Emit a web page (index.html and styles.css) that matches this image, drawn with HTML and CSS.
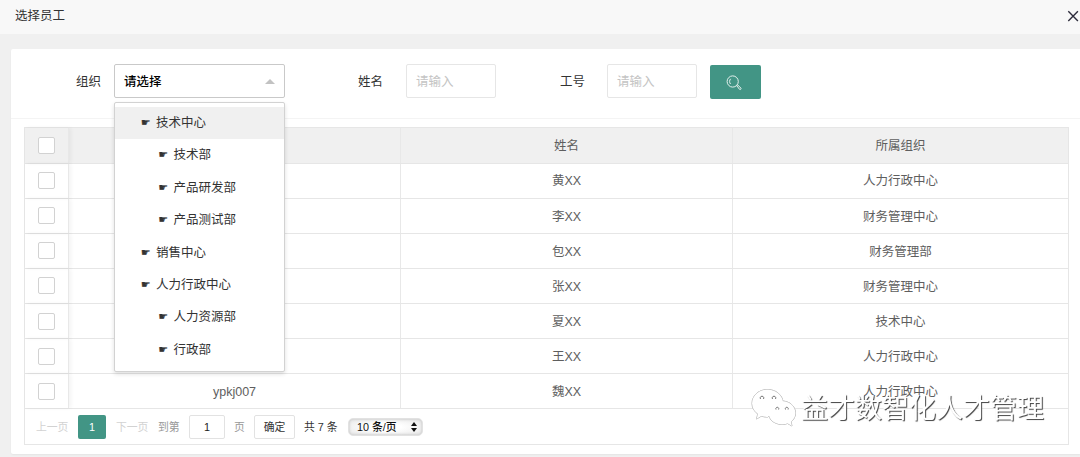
FILE: index.html
```html
<!DOCTYPE html>
<html lang="zh-CN">
<head>
<meta charset="utf-8">
<title>选择员工</title>
<link rel="stylesheet" href="styles.css">
</head>
<body>
<header class="titlebar">
  <span>选择员工</span>
  <svg class="close" viewBox="0 0 12 12"><path d="M1.300 1.300l9.600 9.600M10.900 1.300l-9.600 9.600"/></svg>
</header>
<main class="card">
  <form class="toolbar">
    <label class="label label-org">组织</label>
    <div class="select">
      <span>请选择</span><i class="caret"></i>
      <ul class="menu">
        <li class="active"><b>☛</b>技术中心</li>
        <li class="child"><b>☛</b>技术部</li>
        <li class="child"><b>☛</b>产品研发部</li>
        <li class="child"><b>☛</b>产品测试部</li>
        <li><b>☛</b>销售中心</li>
        <li><b>☛</b>人力行政中心</li>
        <li class="child"><b>☛</b>人力资源部</li>
        <li class="child"><b>☛</b>行政部</li>
      </ul>
    </div>
    <label class="label label-name">姓名</label>
    <div class="input">请输入</div>
    <label class="label label-no">工号</label>
    <div class="input">请输入</div>
    <div class="search">
      <svg viewBox="0 0 16 16"><circle cx="6.700" cy="6.500" r="5.600"/><path d="M4.600 3.800C3.300 5.300 3.300 7.500 4.500 9"/><path d="M10.700 10.600l.9-.8 3.200 3.200c.8.9-.5 2.100-1.300 1.300z"/></svg>
    </div>
  </form>
  <section class="grid">
    <div class="row head"><div class="check"><i></i></div><div></div><div>姓名</div><div>所属组织</div></div>
    <div class="row"><div class="check"><i></i></div><div></div><div>黄XX</div><div>人力行政中心</div></div>
    <div class="row"><div class="check"><i></i></div><div></div><div>李XX</div><div>财务管理中心</div></div>
    <div class="row"><div class="check"><i></i></div><div></div><div>包XX</div><div>财务管理部</div></div>
    <div class="row"><div class="check"><i></i></div><div></div><div>张XX</div><div>财务管理中心</div></div>
    <div class="row"><div class="check"><i></i></div><div></div><div>夏XX</div><div>技术中心</div></div>
    <div class="row"><div class="check"><i></i></div><div></div><div>王XX</div><div>人力行政中心</div></div>
    <div class="row"><div class="check"><i></i></div><div>ypkj007</div><div>魏XX</div><div>人力行政中心</div></div>
    <footer class="pager">
      <span class="muted prev">上一页</span>
      <span class="page">1</span>
      <span class="muted next">下一页</span>
      <span class="goto">到第</span>
      <span class="box number">1</span>
      <span class="goto unit">页</span>
      <span class="box confirm">确定</span>
      <span class="total">共 7 条</span>
      <span class="limit">10 条/页<svg viewBox="0 0 6 10"><path d="M0 4L3 0l3 4zM0 6h6l-3 4z"/></svg></span>
    </footer>
  </section>
</main>
<div class="watermark">
  <svg viewBox="0 0 46 40">
    <path class="bubble" d="M17 29c-2.600 .2-4.500-.2-6.500-1L5.500 31l1.300-5C3.300 23.400 1 19.800 1 15.500 1 7.500 8 1.500 16.500 1.500c8 0 14.500 5 15.500 12"/>
    <path class="bubble" d="M31 13c7.500 0 13.500 5.300 13.500 12 0 3.800-1.800 6.600-4.500 9l1 4-4.400-2.500c-1.800.6-3.600.9-5.600.9C23.500 36.400 17.500 31.500 17.500 25S23.500 13 31 13z"/>
    <path class="eye" d="M9.500 11a1.800 1.800 0 1 1 3 0M21.500 11a1.800 1.800 0 1 1 3 0M25 21.500a1.500 1.500 0 1 1 2.600 0M34.500 21.500a1.500 1.500 0 1 1 2.600 0"/>
  </svg>
  <span>益才数智化人才管理</span>
</div>
</body>
</html>
```

FILE: styles.css
```css
* { box-sizing: border-box; }
body {
  margin: 0;
  height: 457px;
  overflow: hidden;
  background: #f0f0f0;
  color: #333;
  font: 12.5px/20px "Liberation Sans", "Noto Sans CJK SC", sans-serif;
}
.titlebar {
  display: flex;
  align-items: center;
  justify-content: space-between;
  height: 34px;
  padding: 0 0 2px 15px;
  background: #f8f8f8;
}
.close { width: 12px; height: 12px; margin-right: 1px; fill: none; stroke: #2e2d3c; stroke-width: 1.4; }
.card {
  height: 405px;
  margin: 15px 0 0 11px;
  background: #fff;
  border-radius: 2px 0 0 2px;
  box-shadow: 0 1px 2px rgba(0, 0, 0, .05);
}
.toolbar {
  display: flex;
  height: 70px;
  padding-top: 15px;
  border-bottom: 1px solid #f4f4f4;
}
.label { height: 34px; line-height: 36px; text-align: right; }
.label-org { width: 90px; margin-right: 13px; }
.label-name { width: 98px; margin-right: 23px; }
.label-no { width: 89px; margin-right: 22px; }
.select {
  position: relative;
  display: flex;
  align-items: center;
  justify-content: space-between;
  width: 171px;
  height: 34px;
  padding: 1px 9px 0;
  border: 1px solid #c9c9c9;
  border-radius: 2px;
  color: #000;
  font-weight: 500;
}
.caret { border: 5px solid transparent; border-top: 0; border-bottom: 5px solid #c2c2c2; }
.menu {
  position: absolute;
  z-index: 2;
  left: -1px;
  top: 37px;
  width: 171px;
  height: 270px;
  margin: 0;
  padding: 4px 0;
  list-style: none;
  background: #fff;
  border: 1px solid #d2d2d2;
  border-radius: 2px;
  box-shadow: 0 2px 4px rgba(0, 0, 0, .13);
  color: #333;
  font-weight: 400;
}
.menu li { display: flex; height: 32.4px; padding-left: 26px; line-height: 32px; }
.menu .child { padding-left: 43.5px; }
.menu .active { background: #f0f0f0; }
.menu b { width: 15px; font: 10.5px/31px "DejaVu Sans", sans-serif; -webkit-text-stroke: .3px #333; }
.input {
  width: 90px;
  height: 34px;
  padding-left: 9px;
  border: 1px solid #e6e6e6;
  border-radius: 2px;
  line-height: 34px;
  color: #c4c4c4;
}
.search {
  display: flex;
  align-items: center;
  justify-content: center;
  width: 51px;
  height: 34px;
  margin: 1px 0 0 13px;
  padding-top: 2px;
  padding-right: 3px;
  border-radius: 2px;
  background: #429585;
}
.search svg { width: 16px; height: 16px; fill: none; stroke: #e4f1ee; stroke-width: 1; }
.grid {
  width: 1045px;
  margin: 8px 0 0 13px;
  border: 1px solid #e6e6e6;
  color: #5e5e5e;
}
.row {
  display: grid;
  grid-template-columns: 44px 332px 332px 1fr;
  height: 35.1px;
  border-bottom: 1px solid #e6e6e6;
}
.row:first-child { height: 35.600px; }
.row > div {
  display: flex;
  align-items: center;
  justify-content: center;
  padding-top: 1.600px;
  border-right: 1px solid #e8e8e8;
}
.row > div:last-child { border-right: 0; }
.row .check { padding: 0; box-shadow: 2px 0 4px rgba(0, 0, 0, .05); }
.check i { width: 17px; height: 17px; background: #fff; border: 1px solid #d2d2d2; border-radius: 2px; }
.head { background: #f0f0f0; }
.pager {
  display: flex;
  align-items: center;
  height: 35px;
  padding: 1px 0 0 11px;
  font-size: 10.8px;
  white-space: nowrap;
}
.muted { color: #d2d2d2; }
.prev { width: 42px; }
.page { width: 28px; height: 24px; margin-right: 10px; border-radius: 2px; background: #429585; color: #fff; line-height: 24px; text-align: center; }
.next { width: 42px; }
.goto { width: 31px; color: #999; }
.unit { width: 20px; }
.box { height: 24px; border: 1px solid #e2e2e2; border-radius: 2px; line-height: 23px; text-align: center; color: #222; }
.number { width: 36px; margin-right: 9px; }
.confirm { width: 41px; margin-right: 9px; color: #333; }
.total { width: 44px; color: #333; }
.limit {
  display: flex;
  align-items: center;
  justify-content: space-between;
  width: 75px;
  height: 18px;
  padding: 0 5px 0 8px;
  border: 1px solid #e2e2e2;
  border-radius: 5px;
  background: radial-gradient(ellipse, #fff 30%, #ececec 85%);
  box-shadow: inset 0 0 3px #bbb;
  color: #111;
  font-weight: 500;
}
.limit svg { width: 6px; height: 10px; fill: #111; }
.watermark {
  position: absolute;
  z-index: 3;
  left: 751px;
  top: 387px;
  display: flex;
  align-items: center;
  color: #fff;
  font-size: 27px;
  line-height: 40px;
  text-shadow: 1px 1px .8px #444;
  white-space: nowrap;
  will-change: transform;
}
.watermark svg { width: 46px; height: 40px; margin-right: 4px; filter: drop-shadow(.6px .8px .5px #333); }
.watermark span { margin-top: 2px; }
.bubble { fill: #fff; stroke: #fff; stroke-width: .5; }
.eye { fill: none; stroke: #777; stroke-width: 1; }
```
